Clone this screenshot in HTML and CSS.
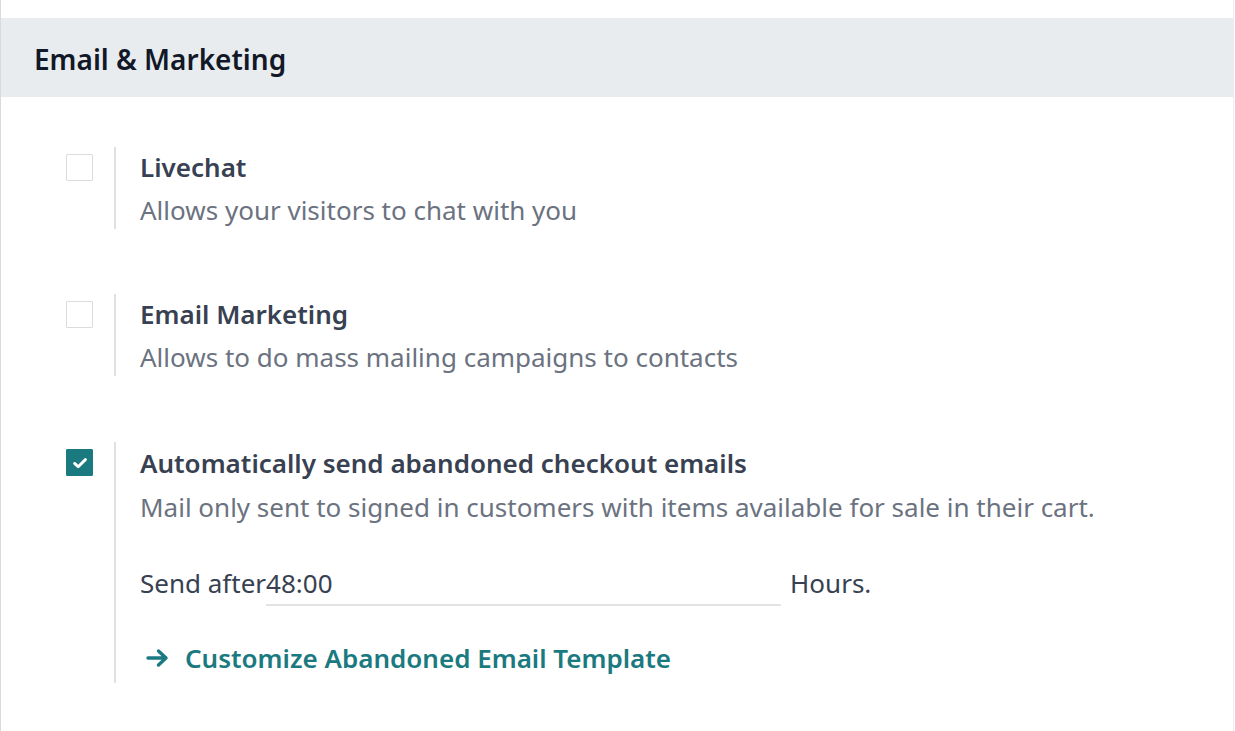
FILE: index.html
```html
<!DOCTYPE html>
<html>
<head>
<meta charset="utf-8">
<link rel="stylesheet" href="styles.css">
</head>
<body>
<div class="page">
  <div class="section-head"><h2 class="section-title">Email &amp; Marketing</h2></div>
  <div class="settings">
    <div class="setting">
      <div class="box-col"><span class="checkbox"></span></div>
      <div class="content">
        <div class="title">Livechat</div>
        <div class="desc">Allows your visitors to chat with you</div>
      </div>
    </div>
    <div class="setting">
      <div class="box-col"><span class="checkbox"></span></div>
      <div class="content">
        <div class="title">Email Marketing</div>
        <div class="desc">Allows to do mass mailing campaigns to contacts</div>
      </div>
    </div>
    <div class="setting setting-last">
      <div class="box-col"><span class="checkbox checked"><svg viewBox="0 0 16 16" width="18" height="18"><path d="M3.2 8.4 L6.4 11.3 L12.8 5" fill="none" stroke="#fff" stroke-width="2.6" stroke-linecap="round" stroke-linejoin="round"/></svg></span></div>
      <div class="content">
        <div class="title">Automatically send abandoned checkout emails</div>
        <div class="desc">Mail only sent to signed in customers with items available for sale in their cart.</div>
        <div class="field-row">
          <span class="label">Send after</span><span class="input">48:00</span><span class="unit">Hours.</span>
        </div>
        <a class="link" href="#"><svg class="arrow" viewBox="0 0 24 20" width="24" height="20"><path d="M2 10 H20 M12.5 3 L20 10 L12.5 17" fill="none" stroke="currentColor" stroke-width="3.4" stroke-linecap="round" stroke-linejoin="round"/></svg>Customize Abandoned Email Template</a>
      </div>
    </div>
  </div>
</div>
</body>
</html>
```
FILE: styles.css
```css
html, body {
  margin: 0;
  padding: 0;
  background: #fff;
}
body {
  font-family: "Noto Sans", "Open Sans", sans-serif;
  color: #374151;
}
.page {
  width: 1234px;
  height: 731px;
  border-left: 1px solid #d8dadd;
  border-right: 1px solid #eceef0;
  box-sizing: border-box;
  padding-top: 18px;
}
.section-head {
  height: 79px;
  background: #e9ecef;
  display: flex;
  align-items: center;
  padding-left: 33px;
  padding-top: 2px;
  box-sizing: border-box;
}
.section-title {
  margin: 0;
  font-size: 28px;
  font-weight: 600;
  color: #111827;
  line-height: 40px;
}
.settings {
  padding-top: 50px;
  display: flex;
  flex-direction: column;
  gap: 65px;
}
.setting {
  display: flex;
}
.setting-last {
  margin-top: 1px;
}
.setting-last .title {
  line-height: 42px;
}
.box-col {
  width: 113px;
  padding-left: 65px;
  box-sizing: border-box;
  padding-top: 7px;
}
.checkbox {
  display: flex;
  align-items: center;
  justify-content: center;
  width: 27px;
  height: 27px;
  box-sizing: border-box;
  border: 1px solid #dcdcdc;
  border-radius: 1px;
  background: #fff;
}
.checkbox.checked {
  background: #1a7a80;
  border-color: #1a7a80;
}
.content {
  border-left: 2px solid #dee0e3;
  padding-left: 24px;
}
.title {
  font-size: 26px;
  font-weight: 600;
  color: #374151;
  line-height: 40px;
}
.desc {
  font-size: 26px;
  color: #6b7280;
  line-height: 38px;
  margin-top: 4px;
}
.field-row {
  display: flex;
  align-items: baseline;
  margin-top: 36px;
  font-size: 26px;
  color: #374151;
  line-height: 42px;
}
.input {
  width: 515px;
  border-bottom: 2px solid #e2e3e5;
  line-height: 42px;
  margin-right: 9px;
}
.link {
  display: flex;
  align-items: center;
  gap: 15px;
  margin-top: 30px;
  padding-left: 6px;
  padding-bottom: 3px;
  font-size: 26px;
  font-weight: 600;
  color: #1a7a80;
  text-decoration: none;
  line-height: 44px;
}
.arrow {
  display: block;
}
```
